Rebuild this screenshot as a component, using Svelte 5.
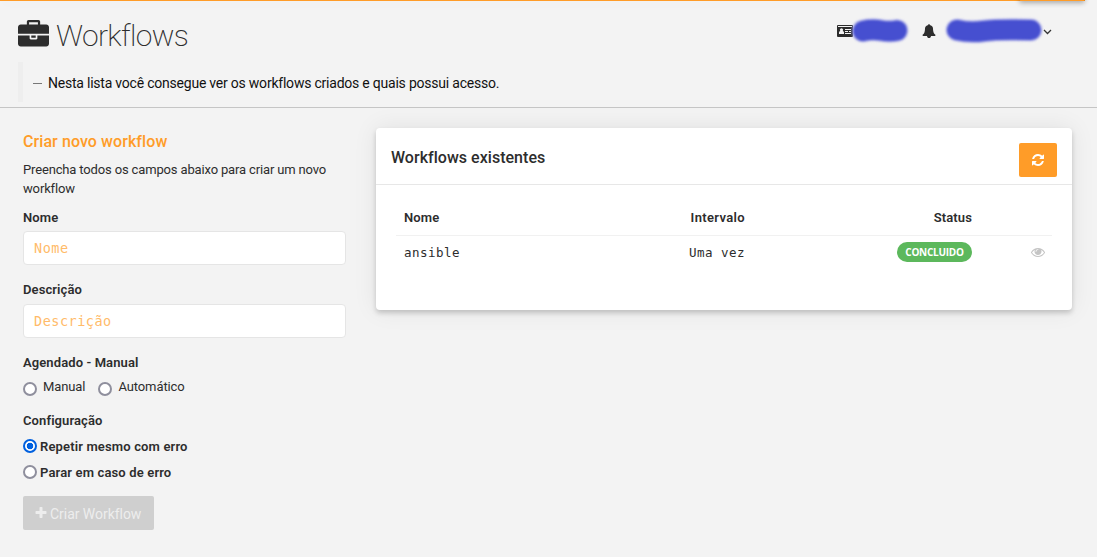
<script>
  let name = $state('');
  let description = $state('');
  let schedule = $state('');
  let config = $state('repeat');

  const rows = [{ name: 'ansible', interval: 'Uma vez', status: 'CONCLUIDO' }];

  const icons = {
    briefcase:
      'M640 256h512v-128h-512v128zm1152 640v480q0 66-47 113t-113 47h-1472q-66 0-113-47t-47-113v-480h672v160q0 26 19 45t45 19h320q26 0 45-19t19-45v-160h672zm-768 0v128h-256v-128h256zm768-480v384h-1792v-384q0-66 47-113t113-47h352v-160q0-40 28-68t68-28h576q40 0 68 28t28 68v160h352q66 0 113 47t47 113z',
    refresh:
      'M1639 1056q0 5-1 7-64 268-268 434.500t-478 166.500q-146 0-282.500-55t-243.500-157l-129 129q-19 19-45 19t-45-19-19-45v-448q0-26 19-45t45-19h448q26 0 45 19t19 45-19 45l-137 137q71 66 161 102t187 36q134 0 250-65t186-179q11-17 53-117 8-23 30-23h192q13 0 22.500 9.500t9.500 22.500zm25-800v448q0 26-19 45t-45 19h-448q-26 0-45-19t-19-45 19-45l138-138q-148-137-349-137-134 0-250 65t-186 179q-11 17-53 117-8 23-30 23h-199q-13 0-22.500-9.500t-9.500-22.500v-7q65-268 270-434.500t480-166.500q146 0 284 55.500t245 156.500l130-129q19-19 45-19t45 19 19 45z',
    bell: 'M1728 1408q0 52-38 90t-90 38h-448q0 106-75 181t-181 75-181-75-75-181h-448q-52 0-90-38t-38-90q50-42 91-88t85-119.500 74.500-158.500 50-206 19.500-260q0-152 117-282.500t307-158.500q-8-19-8-39 0-40 28-68t68-28 68 28 28 68q0 20-8 39 190 28 307 158.500t117 282.500q0 139 19.500 260t50 206 74.500 158.500 85 119.500 91 88z',
    eye: 'M1664 960q-152-236-381-353 61 104 61 225 0 185-131.500 316.500t-316.500 131.500-316.500-131.500-131.500-316.500q0-121 61-225-229 117-381 353 133 205 333.500 326.500t434.500 121.500 434.500-121.500 333.500-326.500zm-720-384q0-20-14-34t-34-14q-125 0-214.500 89.500t-89.500 214.500q0 20 14 34t34 14 34-14 14-34q0-86 61-147t147-61q20 0 34-14t14-34zm848 384q0 34-20 69-140 230-376.500 368.500t-499.500 138.500-499.500-139-376.500-368q-20-35-20-69t20-69q140-229 376.500-368t499.500-139 499.500 139 376.500 368q20 35 20 69z',
    plus: 'M1600 736v192q0 40-28 68t-68 28h-416v416q0 40-28 68t-68 28h-192q-40 0-68-28t-28-68v-416h-416q-40 0-68-28t-28-68v-192q0-40 28-68t68-28h416v-416q0-40 28-68t68-28h192q40 0 68 28t28 68v416h416q40 0 68 28t28 68z'
  };
</script>

{#snippet icon(key, size)}
  <svg class="icon" width={size} height={size} viewBox="0 0 1792 1792" aria-hidden="true"><path d={icons[key]} /></svg>
{/snippet}

<div class="page">
  <div class="progress"><span class="peg"></span></div>
  <header>
    <div class="top">
      <h1>{@render icon('briefcase', 31)}<span>Workflows</span></h1>
      <nav>
        <svg class="card-icon" width="16" height="12" viewBox="0 0 16 12">
          <path fill="#2b2b2b" d="M1 0h14a1 1 0 0 1 1 1v10a1 1 0 0 1-1 1H1a1 1 0 0 1-1-1V1a1 1 0 0 1 1-1z" />
          <path stroke="#f3f3f3" d="M1 1.500h14M8 4.500h6M8 6.500h3M12 6.500h2M8 8.500h6" />
          <path fill="#f3f3f3" d="M2 9V7.500q0-1.200 1.300-1.500a1.600 1.600 0 1 1 2.400 0Q7 6.300 7 7.500V9z" />
        </svg>
        <svg class="scribble tenant" width="60" height="26" viewBox="0 0 60 26">
          <path class="halo" d="M13 13Q22 11 31 12.500T47 12.500" />
          <path class="ink" d="M13 13Q22 11 31 12.500T47 12.500" />
        </svg>
        <span class="bell">{@render icon('bell', 14)}</span>
        <svg class="scribble user" width="100" height="26" viewBox="0 0 100 26">
          <path class="halo" d="M13 12Q26 15 40 13T87 12" />
          <path class="ink" d="M13 12Q26 15 40 13T87 12" />
        </svg>
        <svg class="chevron" width="9" height="6" viewBox="0 0 9 6"><path d="M1 1l3.500 3.500L8 1" /></svg>
      </nav>
    </div>
    <blockquote><i></i><span>Nesta lista você consegue ver os workflows criados e quais possui acesso.</span></blockquote>
  </header>

  <main>
    <form>
      <h2>Criar novo workflow</h2>
      <p>Preencha todos os campos abaixo para criar um novo<br />workflow</p>
      <label class="title t-nome" for="nome">Nome</label>
      <input class="field" id="nome" type="text" placeholder="Nome" bind:value={name} />
      <label class="title t-desc" for="desc">Descrição</label>
      <input class="field" id="desc" type="text" placeholder="Descrição" bind:value={description} />
      <div class="title t-agend">Agendado - Manual</div>
      <div class="inline">
        <label><input type="radio" value="manual" bind:group={schedule} /><span>Manual</span></label>
        <label><input type="radio" value="auto" bind:group={schedule} /><span>Automático</span></label>
      </div>
      <div class="title t-conf">Configuração</div>
      <label class="stack"><input type="radio" value="repeat" bind:group={config} /><span>Repetir mesmo com erro</span></label>
      <label class="stack"><input type="radio" value="stop" bind:group={config} /><span>Parar em caso de erro</span></label>
      <button class="create" type="button" disabled>{@render icon('plus', 14)}<span>Criar Workflow</span></button>
    </form>

    <section>
      <div class="head">
        <h3>Workflows existentes</h3>
        <button class="reload" type="button" aria-label="Atualizar">{@render icon('refresh', 14)}</button>
      </div>
      <div class="table">
        <div class="row th">
          <span>Nome</span><span class="h-int">Intervalo</span><span>Status</span><span></span>
        </div>
        {#each rows as row}
          <div class="row td">
            <span>{row.name}</span><span>{row.interval}</span>
            <span><b class="badge">{row.status}</b></span>
            <span class="view">{@render icon('eye', 14)}</span>
          </div>
        {/each}
      </div>
    </section>
  </main>
</div>

<style>
  :global(body) { margin: 0; background: #f3f3f3; }
  .page { position: relative; width: 1097px; height: 557px; overflow: hidden; box-sizing: border-box; background: #f3f3f3; color: #2d2d2d; font-family: Roboto, "Open Sans", sans-serif; font-size: 13px; }
  .icon { fill: currentColor; display: block; flex: none; }
  .progress { position: absolute; top: 0; left: 0; width: 1085px; height: 1px; background: #ff9c28; box-shadow: 0 0 14px rgba(0,0,0,.1); }
  .peg { position: absolute; right: 0; top: -6px; width: 66px; height: 7px; box-shadow: 0 2px 5px rgba(0,0,0,.3); border-radius: 3px; border-bottom: 1px solid #ff9c28; box-sizing: border-box; }

  header { height: 107px; border-bottom: 1px solid #c5c5c5; box-sizing: content-box; overflow: hidden; }
  .top { display: flex; justify-content: space-between; height: 62px; }
  h1 { display: flex; margin: 0 0 0 18px; font-weight: 200; font-size: 30px; line-height: 36px; padding-top: 18px; letter-spacing: -.65px; }
  h1 .icon { margin-top: 2px; }
  h1 span { margin-left: 7px; }
  nav { display: flex; align-items: flex-start; padding: 25px 45px 0 0; }
  .card-icon { fill: none; }
  .scribble { fill: none; stroke-linecap: round; margin-top: -7px; overflow: visible; }
  .halo { stroke: #a9abeb; stroke-width: 23; opacity: .65; filter: blur(1px); }
  .ink { stroke: #464fd0; stroke-width: 20; filter: blur(.8px); }
  .tenant { margin-left: -3px; }
  .bell { margin: -1px 0 0 12px; }
  .user { margin: -7px 1px 0 8px; }
  .chevron { fill: none; stroke: #333; stroke-width: 1.300; margin: 4px 0 0 -2px; }

  blockquote { display: flex; align-items: center; margin: 0 0 0 18px; height: 40px; border-left: 5px solid #eee; padding-left: 10px; box-sizing: border-box; color: #111; font-size: 14px; letter-spacing: -.22px; }
  blockquote i { width: 9px; height: 1px; background: #777; margin: 2px 6px 0 0; }
  blockquote span { padding-top: 1px; }

  main { display: flex; align-items: flex-start; }
  form { width: 323px; margin: 20px 30px 0 23px; }
  h2 { margin: 0; font-size: 16px; font-weight: 500; line-height: 28px; letter-spacing: .08px; color: #ff9c28; }
  p { margin: 4px 0 0; line-height: 19px; letter-spacing: -.15px; }
  .title { display: block; font-size: 13px; font-weight: 600; line-height: 18px; letter-spacing: .1px; }
  .t-nome { position: relative; top: 1px; margin-top: 10px; }
  .t-desc, .t-agend { margin-top: 16px; }
  .field { display: block; width: 323px; height: 34px; margin-top: 5px; padding: 0 10px; box-sizing: border-box; border: 1px solid #e5e5e5; border-radius: 4px; background: #fff; font: 13.500px "DejaVu Sans Mono", monospace; letter-spacing: .5px; color: #333; outline: none; }
  .field::placeholder { color: #ffbb69; opacity: 1; }
  input[type="radio"] { appearance: none; flex: none; width: 14px; height: 14px; margin: 0; border: 2px solid #8f8f9d; border-radius: 50%; background: #fff; box-sizing: border-box; }
  input[type="radio"]:checked { border-color: #0060df; background: radial-gradient(circle, #0060df 3px, #fff 3.600px); }
  .inline { display: flex; height: 20px; margin-top: 6px; line-height: 18px; gap: 13px; letter-spacing: -.1px; }
  .inline label { display: flex; }
  .inline input { margin: 4px 6px 0 0; }
  .t-conf { margin-top: 14px; }
  .stack { display: flex; align-items: center; height: 18px; margin-top: 8px; font-weight: 600; letter-spacing: .15px; }
  .t-conf + .stack { margin-top: 7px; }
  .stack input { margin-right: 3px; }
  .create { display: flex; align-items: center; width: 131px; height: 34px; margin-top: 15px; padding: 0 0 0 11px; border: 0; border-radius: 2px; background: #cfcfcf; color: #ededed; font: 14px Roboto, sans-serif; letter-spacing: -.04px; }
  .create span { margin: 1px 0 0 2px; white-space: nowrap; }

  section { width: 696px; height: 182px; margin-top: 20px; background: #fff; border-radius: 4px; box-shadow: 0 3px 5px rgba(0,0,0,.18), 0 0 24px rgba(0,0,0,.08); }
  .head { display: flex; justify-content: space-between; height: 57px; padding: 15px 15px 0; border-bottom: 1px solid #e7e7e7; box-sizing: border-box; }
  h3 { margin: 0; font-size: 16px; font-weight: 500; line-height: 29px; letter-spacing: .03px; }
  .reload { display: flex; align-items: center; justify-content: center; width: 38px; height: 34px; padding: 0; border: 0; border-radius: 2px; background: #ff9c28; color: #fff; }
  .table { padding: 15px 20px; }
  .row { display: grid; grid-template-columns: 180px 171px 227px 79px; align-items: center; height: 35px; }
  .row > span:nth-child(1) { padding-left: 8px; }
  .row > span:nth-child(2), .row > span:nth-child(3) { text-align: right; }
  .row > span:nth-child(3) { padding-right: 2px; }
  .row > span:nth-child(2) { padding-right: 2px; }
  .th { font-weight: 600; letter-spacing: .12px; border-bottom: 1px solid #f1f1f1; }
  .h-int { letter-spacing: .35px; }
  .td { height: 32px; font-family: "DejaVu Sans Mono", monospace; font-size: 12.500px; letter-spacing: .46px; }
  .badge { display: inline-flex; align-items: center; justify-content: center; width: 75px; height: 20px; border-radius: 10px; background: #5cb85c; color: #fff; font: 700 10px "Open Sans", sans-serif; letter-spacing: -.25px; vertical-align: middle; }
  .view { display: flex; justify-content: flex-end; padding-right: 8px; color: #c4c4c4; }
</style>
